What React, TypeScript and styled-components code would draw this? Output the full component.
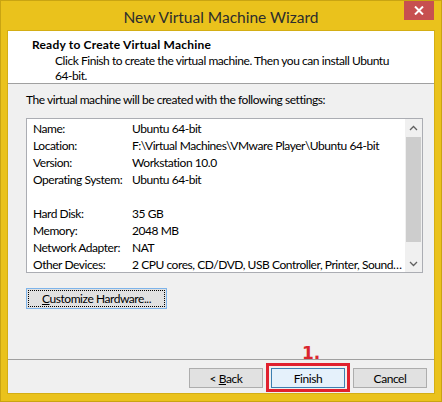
import { Fragment } from "react";
import styled, { createGlobalStyle } from "styled-components";

const GlobalStyle = createGlobalStyle`
  html, body {
    margin: 0;
    padding: 0;
    background: #ffffff;
  }
  body {
    font-family: Lato, "Liberation Sans", sans-serif;
    font-size: 12px;
    letter-spacing: -0.45px;
    color: #000;
  }
`;

const Frame = styled.div`
  width: 442px;
  height: 402px;
  box-sizing: border-box;
  background: #eac21c;
  border: 1px solid #c9a412;
  padding: 0 7px 8px;
  display: flex;
  flex-direction: column;
`;

const TitleBar = styled.div`
  height: 30px;
  display: grid;
  grid-template-columns: 1fr auto 1fr;
  align-items: center;
`;

const Title = styled.div`
  grid-column: 2;
  font-size: 15.5px;
  letter-spacing: 0;
  color: #2d2d2d;
  padding-top: 1px;
`;

const CloseButton = styled.div`
  grid-column: 3;
  justify-self: end;
  align-self: start;
  width: 30px;
  height: 19px;
  background: #c75050;
  display: flex;
  align-items: center;
  justify-content: center;
`;

const Content = styled.div`
  flex: 1;
  display: flex;
  flex-direction: column;
  background: #f0f0f0;
  box-shadow: 0 0 0 1px #d4ae14;
`;

const Header = styled.div`
  height: 53px;
  box-sizing: border-box;
  background: #fff;
  border-bottom: 1px solid #a0a0a0;
  padding: 6px 0 0 24px;
`;

const HeaderTitle = styled.div`
  font-weight: bold;
  line-height: 16px;
  letter-spacing: 0.2px;
`;

const HeaderText = styled.div`
  line-height: 15px;
  padding-left: 23px;
  width: 340px;
`;

const Body = styled.div`
  flex: 1;
  padding: 8px 11px 0 18px;
  display: flex;
  flex-direction: column;
  align-items: flex-start;
`;

const Intro = styled.div`
  line-height: 16px;
  margin-bottom: 10px;
`;

const ListBox = styled.div`
  align-self: stretch;
  height: 155px;
  box-sizing: border-box;
  background: #fff;
  border: 1px solid #abadb3;
  display: flex;
`;

const Rows = styled.div`
  flex: 1;
  padding: 1px 0 0 6px;
  display: grid;
  grid-template-columns: 99px 1fr;
  grid-auto-rows: 17px;
  align-items: center;
  align-content: start;
  white-space: nowrap;
`;

const Spacer = styled.div`
  grid-column: 1 / -1;
`;

const ScrollBar = styled.div`
  width: 17px;
  display: flex;
  flex-direction: column;
  background: #f0f0f0;
`;

const ArrowBox = styled.div`
  height: 17px;
  display: flex;
  align-items: center;
  justify-content: center;
`;

const Track = styled.div`
  flex: 1;
  padding: 1px 0;
`;

const Thumb = styled.div`
  margin: 0 1px;
  background: #cdcdcd;
`;

const Button = styled.button<{ $primary?: boolean }>`
  font-family: inherit;
  font-size: 12px;
  letter-spacing: inherit;
  color: #000;
  width: 74px;
  height: 20px;
  padding: 0;
  box-sizing: border-box;
  background: ${({ $primary }) => ($primary ? "#e5f1fb" : "#e1e1e1")};
  border: 1px solid ${({ $primary }) => ($primary ? "#3c7fb1" : "#adadad")};
  display: flex;
  align-items: center;
  justify-content: center;
`;

const CustomizeButton = styled(Button)`
  width: 141px;
  height: 21px;
  margin-top: 15px;
  padding: 1px;
  border-color: #7eb4ea;
`;

const FocusRing = styled.span`
  flex: 1;
  align-self: stretch;
  border: 1px dotted #000;
  display: flex;
  align-items: center;
  justify-content: center;
`;

const Footer = styled.div`
  border-top: 1px solid #a0a0a0;
  padding: 8px 7px 5px 0;
  display: flex;
  justify-content: flex-end;
  gap: 8px;
`;

const Highlighted = styled.div`
  position: relative;
`;

const Marker = styled.div`
  position: absolute;
  inset: -5px -5px -4px -5px;
  border: 3px solid #e0202e;
  pointer-events: none;
`;

const StepLabel = styled.div`
  position: absolute;
  left: 31px;
  top: -25px;
  font-family: "DejaVu Sans", Verdana, sans-serif;
  font-weight: bold;
  font-size: 17px;
  letter-spacing: 0;
  color: #d9262e;
`;

const settings: [string, string][] = [
  ["Name:", "Ubuntu 64-bit"],
  ["Location:", "F:\\Virtual Machines\\VMware Player\\Ubuntu 64-bit"],
  ["Version:", "Workstation 10.0"],
  ["Operating System:", "Ubuntu 64-bit"],
  ["", ""],
  ["Hard Disk:", "35 GB"],
  ["Memory:", "2048 MB"],
  ["Network Adapter:", "NAT"],
  ["Other Devices:", "2 CPU cores, CD/DVD, USB Controller, Printer, Sound\u2026"],
];

const Chevron = ({ up }: { up?: boolean }) => (
  <svg width="9" height="6" viewBox="0 0 9 6">
    <path
      d={up ? "M1 5 L4.5 1.5 L8 5" : "M1 1 L4.5 4.5 L8 1"}
      fill="none"
      stroke="#606060"
      strokeWidth="1.3"
    />
  </svg>
);

export default function App() {
  return (
    <>
      <GlobalStyle />
      <Frame>
        <TitleBar>
          <Title>New Virtual Machine Wizard</Title>
          <CloseButton>
            <svg width="10" height="9" viewBox="0 0 10 9">
              <path d="M1 0.5 L9 8.5 M9 0.5 L1 8.5" stroke="#fff" strokeWidth="2" />
            </svg>
          </CloseButton>
        </TitleBar>
        <Content>
          <Header>
            <HeaderTitle>Ready to Create Virtual Machine</HeaderTitle>
            <HeaderText>
              Click Finish to create the virtual machine. Then you can install Ubuntu 64-bit.
            </HeaderText>
          </Header>
          <Body>
            <Intro>The virtual machine will be created with the following settings:</Intro>
            <ListBox>
              <Rows>
                {settings.map(([label, value], i) =>
                  label ? (
                    <Fragment key={i}>
                      <div>{label}</div>
                      <div>{value}</div>
                    </Fragment>
                  ) : (
                    <Spacer key={i} />
                  )
                )}
              </Rows>
              <ScrollBar>
                <ArrowBox>
                  <Chevron up />
                </ArrowBox>
                <Track>
                  <Thumb style={{ height: 105 }} />
                </Track>
                <ArrowBox>
                  <Chevron />
                </ArrowBox>
              </ScrollBar>
            </ListBox>
            <CustomizeButton>
              <FocusRing>
                <u>C</u>ustomize Hardware...
              </FocusRing>
            </CustomizeButton>
          </Body>
          <Footer>
            <Button>
              &lt;&nbsp;<u>B</u>ack
            </Button>
            <Highlighted>
              <Button $primary>Finish</Button>
              <Marker />
              <StepLabel>1.</StepLabel>
            </Highlighted>
            <Button>Cancel</Button>
          </Footer>
        </Content>
      </Frame>
    </>
  );
}
